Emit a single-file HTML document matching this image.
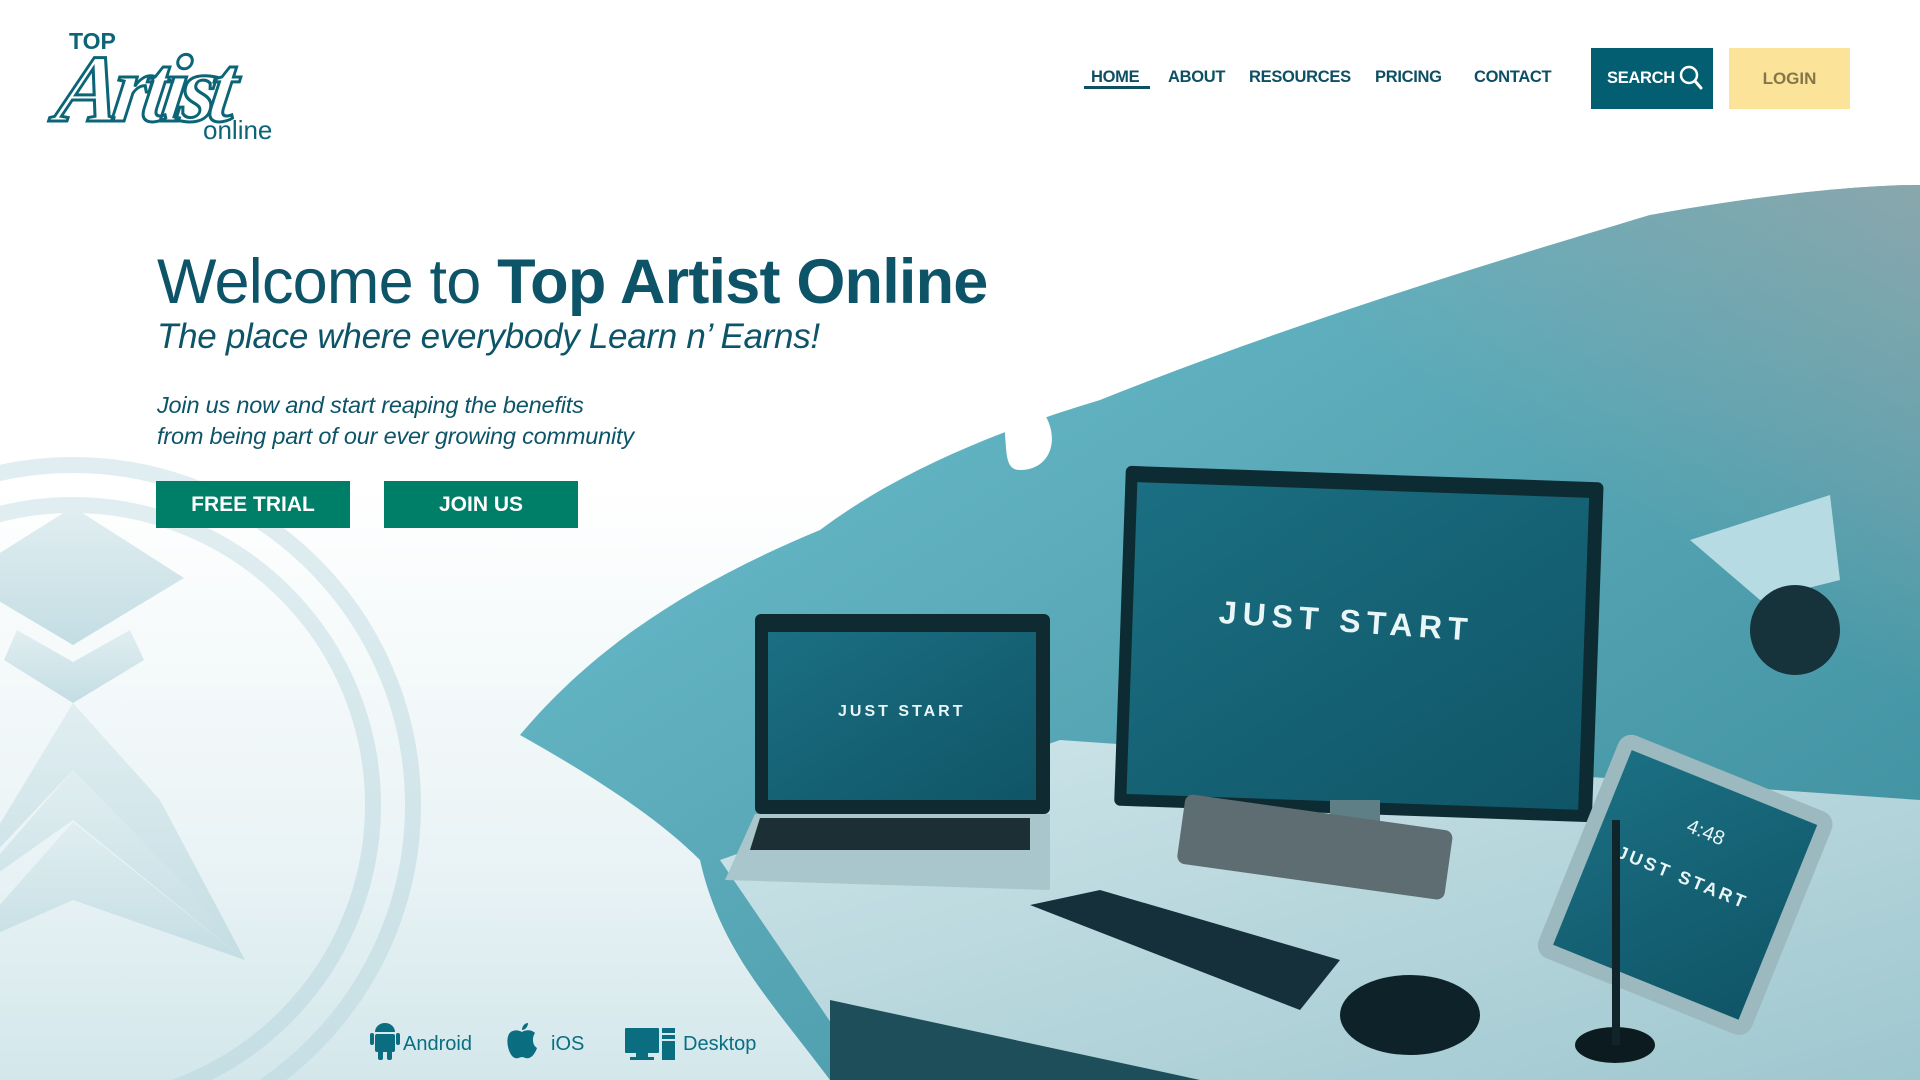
<!DOCTYPE html>
<html><head><meta charset="utf-8"><style>
*{margin:0;padding:0;box-sizing:border-box}
html,body{width:1920px;height:1080px;overflow:hidden}
body{position:relative;font-family:"Liberation Sans",sans-serif;background:linear-gradient(#fff 0%,#fff 45%,#e9f3f5 80%,#d3e7eb 100%)}
.a{position:absolute}
.nav{font-weight:bold;font-size:16.5px;color:#0d4f63;top:68px;letter-spacing:-0.3px}
</style></head><body>
<svg class="a" style="left:0;top:0" width="1920" height="1080">
<defs>
<linearGradient id="wm" x1="0" y1="0" x2="0" y2="1"><stop offset="0" stop-color="#e1eef1"/><stop offset="1" stop-color="#c3dde3"/></linearGradient>
<linearGradient id="wall" x1="0" y1="0" x2="1" y2="1"><stop offset="0" stop-color="#6fc4d4"/><stop offset="0.45" stop-color="#5aa9b8"/><stop offset="1" stop-color="#3a8c9c"/></linearGradient>
<linearGradient id="wall2" x1="1" y1="0" x2="0" y2="1"><stop offset="0" stop-color="#8fa7ab" stop-opacity="0.9"/><stop offset="0.5" stop-color="#8fa7ab" stop-opacity="0"/></linearGradient>
<linearGradient id="desk" x1="0" y1="0" x2="1" y2="1"><stop offset="0" stop-color="#cfe6ea"/><stop offset="1" stop-color="#9fc7cf"/></linearGradient>
<linearGradient id="scr" x1="0" y1="0" x2="1" y2="1"><stop offset="0" stop-color="#1b6f82"/><stop offset="1" stop-color="#0f5567"/></linearGradient>
</defs>
<g fill="none" stroke="url(#wm)">
<circle cx="73" cy="805" r="340" stroke-width="16"/>
<circle cx="73" cy="805" r="300" stroke-width="16"/>
</g>
<g fill="url(#wm)">
<polygon points="73,507 184,578 73,645 -40,578"/>
<polygon points="17,630 73,662 130,630 144,660 73,703 4,660"/>
<polygon points="73,703 160,800 245,960 73,770 -40,890"/>
<polygon points="73,770 190,890 245,960 73,820 -40,900"/>
<polygon points="73,822 245,960 73,900 -40,950"/>
</g>
<path d="M520,735 C600,640 700,580 820,530 C900,470 1000,430 1100,400 C1300,320 1500,260 1650,215 C1760,195 1860,185 1920,185 L1920,1080 L830,1080 C770,1000 720,950 700,860 C660,820 600,780 520,735 Z" fill="url(#wall)"/>
<path d="M1100,400 C1300,320 1500,260 1650,215 C1760,195 1860,185 1920,185 L1920,700 C1700,600 1400,500 1100,400 Z" fill="url(#wall2)"/>
<path d="M1000,400 C1010,440 1000,470 1020,470 C1050,470 1060,440 1045,415 Z" fill="#fff"/>
<polygon points="720,860 1060,740 1920,800 1920,1080 870,1080" fill="url(#desk)"/>
<polygon points="830,1000 1200,1080 830,1080" fill="#1e4e5a"/>
<polygon points="1690,540 1830,495 1840,580 1760,600" fill="#b6dbe2"/>
<circle cx="1795" cy="630" r="45" fill="#16333b"/>
<rect x="1120" y="474" width="478" height="340" rx="6" fill="#0d2b33" transform="rotate(2 1360 640)"/>
<rect x="1132" y="490" width="452" height="312" fill="url(#scr)" transform="rotate(2 1360 640)"/>
<text x="1218" y="630" fill="#e8f6f8" font-size="32" font-weight="bold" letter-spacing="6" transform="rotate(4 1320 630)" font-family="Liberation Sans">JUST START</text>
<rect x="1330" y="800" width="50" height="40" fill="#5f7f87"/>
<rect x="1180" y="810" width="270" height="70" rx="8" fill="#5d6d72" transform="rotate(8 1300 845)"/>
<rect x="755" y="614" width="295" height="200" rx="6" fill="#0f2a31"/>
<rect x="768" y="632" width="268" height="168" fill="url(#scr)"/>
<text x="838" y="716" fill="#e8f6f8" font-size="16" font-weight="bold" letter-spacing="3" font-family="Liberation Sans">JUST START</text>
<polygon points="755,814 1050,814 1050,890 725,880" fill="#a9c6cc"/>
<polygon points="760,818 1030,818 1030,850 750,850" fill="#1b2f35"/>
<polygon points="1030,905 1100,890 1340,960 1300,1010" fill="#15303a"/>
<ellipse cx="1410" cy="1015" rx="70" ry="40" fill="#0e2329"/>
<g transform="rotate(22 1675 870)">
<rect x="1575" y="760" width="230" height="240" rx="14" fill="#9bb9bf"/>
<rect x="1590" y="775" width="200" height="210" fill="url(#scr)"/>
<text x="1615" y="880" fill="#e8f6f8" font-size="18" font-weight="bold" letter-spacing="3" font-family="Liberation Sans">JUST START</text>
<text x="1670" y="830" fill="#e8f6f8" font-size="20" font-family="Liberation Sans">4:48</text>
</g>
<ellipse cx="1615" cy="1045" rx="40" ry="18" fill="#0c1b20"/>
<rect x="1612" y="820" width="8" height="225" fill="#10252b"/>
<g fill="#0a6e80">
<rect x="375" y="1034" width="20" height="18" rx="2"/>
<path d="M375,1032 a10,9 0 0 1 20,0 z"/>
<rect x="370" y="1033" width="4" height="12" rx="2"/><rect x="396" y="1033" width="4" height="12" rx="2"/>
<rect x="378" y="1050" width="5" height="10" rx="2"/><rect x="387" y="1050" width="5" height="10" rx="2"/>
<path d="M535,1033 c-4,-4 -10,-3 -13,-1 c-3,-2 -10,-3 -13,2 c-4,7 0,22 6,24 c3,1 5,-1 7,-1 c2,0 4,2 7,1 c4,-1 7,-7 8,-10 c-5,-3 -5,-11 -2,-15z M522,1030 c0,-4 3,-7 6,-7 c0,4 -3,7 -6,7z"/>
<rect x="625" y="1028" width="34" height="25" rx="1"/><rect x="636" y="1053" width="12" height="4"/><rect x="630" y="1057" width="24" height="3"/>
<rect x="662" y="1028" width="13" height="5"/><rect x="662" y="1035" width="13" height="4"/><rect x="662" y="1041" width="13" height="19"/>
</g>
</svg>
<div class="a" style="left:69px;top:28px;font-weight:bold;font-size:23px;color:#0b6577">TOP</div>
<div class="a" style="left:58px;top:34px;font-family:'Liberation Serif',serif;font-style:italic;font-weight:bold;font-size:96px;line-height:110px;color:#fff;-webkit-text-stroke:3px #0b6577;letter-spacing:-8px;transform:skewX(-8deg)">Artist</div>
<div class="a" style="left:203px;top:115px;font-size:26px;color:#0b6577">online</div>
<div class="a nav" style="left:1091px">HOME</div>
<div class="a" style="left:1084px;top:86px;width:66px;height:3px;background:#0d4f63"></div>
<div class="a nav" style="left:1168px">ABOUT</div>
<div class="a nav" style="left:1249px">RESOURCES</div>
<div class="a nav" style="left:1375px">PRICING</div>
<div class="a nav" style="left:1474px">CONTACT</div>
<div class="a" style="left:1591px;top:48px;width:122px;height:61px;background:#035e72;color:#fff;font-weight:bold;font-size:16.5px;line-height:61px;padding-left:16px;letter-spacing:-0.3px">SEARCH
<svg style="position:absolute;left:87px;top:16px" width="26" height="28"><circle cx="11" cy="11" r="8" fill="none" stroke="#fff" stroke-width="2.5"/><line x1="17" y1="17" x2="23" y2="24" stroke="#fff" stroke-width="3" stroke-linecap="round"/></svg></div>
<div class="a" style="left:1729px;top:48px;width:121px;height:61px;background:#fbe49a;color:#85764a;font-weight:bold;font-size:17px;line-height:61px;text-align:center">LOGIN</div>
<div class="a" style="left:157px;top:246px;font-size:63px;line-height:72px;color:#0d5468;white-space:nowrap;letter-spacing:-0.8px">Welcome to <b>Top Artist Online</b></div>
<div class="a" style="left:157px;top:316px;font-size:35px;line-height:42px;font-style:italic;color:#0d5468;white-space:nowrap;letter-spacing:-0.3px">The place where everybody Learn n’ Earns!</div>
<div class="a" style="left:157px;top:390px;font-size:23.5px;font-style:italic;color:#0d5468;line-height:31px;white-space:nowrap;letter-spacing:-0.2px">Join us now and start reaping the benefits<br>from being part of our ever growing community</div>
<div class="a" style="left:156px;top:481px;width:194px;height:47px;background:#007f68;color:#fff;font-weight:bold;font-size:21px;line-height:47px;text-align:center">FREE TRIAL</div>
<div class="a" style="left:384px;top:481px;width:194px;height:47px;background:#007f68;color:#fff;font-weight:bold;font-size:21px;line-height:47px;text-align:center">JOIN US</div>
<div class="a" style="left:403px;top:1032px;font-size:20px;line-height:24px;color:#0a6e80">Android</div>
<div class="a" style="left:551px;top:1032px;font-size:20px;line-height:24px;color:#0a6e80">iOS</div>
<div class="a" style="left:683px;top:1032px;font-size:20px;line-height:24px;color:#0a6e80">Desktop</div>
</body></html>
